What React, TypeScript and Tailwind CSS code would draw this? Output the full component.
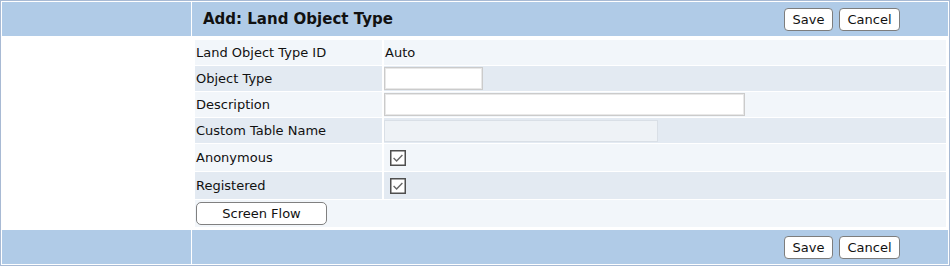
import React from 'react'

type Row = {
  label: string
  kind: 'text' | 'input' | 'disabled' | 'check'
  value?: string
  width?: string
  h: string
}

const rows: Row[] = [
  { label: 'Land Object Type ID', kind: 'text', value: 'Auto', h: 'h-[25px]' },
  { label: 'Object Type', kind: 'input', width: 'w-[99px]', h: 'h-[25px]' },
  { label: 'Description', kind: 'input', width: 'w-[361px]', h: 'h-[25px]' },
  { label: 'Custom Table Name', kind: 'disabled', width: 'w-[274px]', h: 'h-[25px]' },
  { label: 'Anonymous', kind: 'check', h: 'h-[27px]' },
  { label: 'Registered', kind: 'check', h: 'h-[27px]' },
]

const CheckBox = () => (
  <svg width="16" height="16" viewBox="0 0 16 16" className="ml-[6px]">
    <rect x="0.75" y="0.75" width="14.5" height="14.5" fill="#fff" stroke="#4f4f4f" strokeWidth="1.5" />
    <path d="M3.6 8 L6.6 10.9 L12.4 4.9" fill="none" stroke="#666" strokeWidth="1.4" />
  </svg>
)

const Buttons = () => (
  <div className="flex gap-[6px]">
    <button className="w-[49px] h-[23px] bg-white border border-[#7d7d7d] rounded-[4px] text-[13px] leading-none">
      Save
    </button>
    <button className="w-[61px] h-[23px] bg-white border border-[#7d7d7d] rounded-[4px] text-[13px] leading-none">
      Cancel
    </button>
  </div>
)

export default function App() {
  return (
    <div className="w-[950px] h-[266px] border border-[#a8bad4] p-px bg-white text-[13px] text-[#111] font-['DejaVu_Sans',Verdana,sans-serif]">
      <div className="grid grid-cols-[189px_1fr] grid-rows-[34px_194px_34px] gap-x-px h-full">
        {/* header */}
        <div className="bg-[#b0cbe7]" />
        <div className="bg-[#b0cbe7] flex items-center justify-between pl-[11px] pr-[48px]">
          <h1 className="text-[15px] font-bold text-[#111] pt-[1px]">Add: Land Object Type</h1>
          <Buttons />
        </div>

        {/* body */}
        <div className="bg-white" />
        <div className="pt-[4px] pl-[3px] pr-[2px] flex flex-col gap-px">
          {rows.map((r, i) => {
            const bg = i % 2 === 0 ? 'bg-[#f2f6fa]' : 'bg-[#e3eaf2]'
            return (
              <div key={r.label} className={`grid grid-cols-[187px_1fr] gap-x-[2px] ${r.h}`}>
                <div className={`${bg} flex items-center pl-px`}>{r.label}</div>
                <div className={`${bg} flex items-center`}>
                  {r.kind === 'text' && <span className="pl-px">{r.value}</span>}
                  {r.kind === 'input' && (
                    <div
                      className={`${r.width} h-[23px] bg-white border border-[#cbcbcb] shadow-[inset_0_0_0_1px_#e8e8e8]`}
                    />
                  )}
                  {r.kind === 'disabled' && (
                    <div className={`${r.width} h-[22px] bg-[#eef2f6] border border-[#d9dfe6]`} />
                  )}
                  {r.kind === 'check' && <CheckBox />}
                </div>
              </div>
            )
          })}
          <div className="h-[27px] bg-[#f2f6fa] flex items-center">
            <button className="ml-px w-[131px] h-[23px] bg-white border border-[#808080] rounded-[5px] text-[13px] leading-none">
              Screen Flow
            </button>
          </div>
        </div>

        {/* footer */}
        <div className="bg-[#b0cbe7]" />
        <div className="bg-[#b0cbe7] flex items-center justify-end pr-[48px] pt-[1px]">
          <Buttons />
        </div>
      </div>
    </div>
  )
}
